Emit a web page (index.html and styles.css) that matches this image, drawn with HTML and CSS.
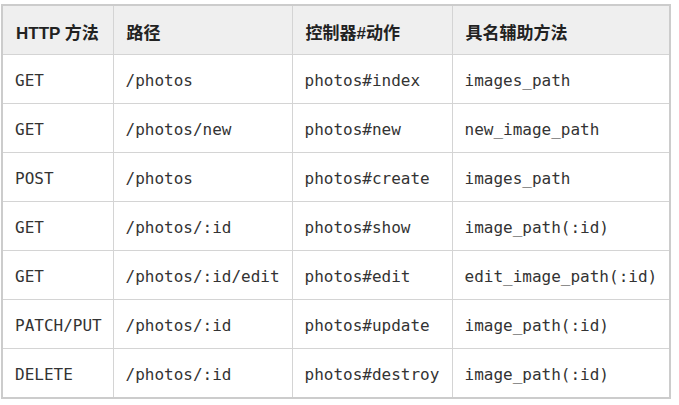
FILE: index.html
```html
<!DOCTYPE html>
<html lang="zh-CN">
<head>
    <meta charset="UTF-8">
    <title>资源路由</title>
    <link rel="stylesheet" href="styles.css">
</head>
<body>

<table class="route-table">
    <colgroup>
        <col class="col-verb">
        <col class="col-path">
        <col class="col-action">
        <col class="col-helper">
    </colgroup>
    <thead>
        <tr>
            <th>HTTP 方法</th>
            <th>路径</th>
            <th>控制器#动作</th>
            <th>具名辅助方法</th>
        </tr>
    </thead>
    <tbody>
        <tr>
            <td>GET</td>
            <td>/photos</td>
            <td>photos#index</td>
            <td>images_path</td>
        </tr>
        <tr>
            <td>GET</td>
            <td>/photos/new</td>
            <td>photos#new</td>
            <td>new_image_path</td>
        </tr>
        <tr>
            <td>POST</td>
            <td>/photos</td>
            <td>photos#create</td>
            <td>images_path</td>
        </tr>
        <tr>
            <td>GET</td>
            <td>/photos/:id</td>
            <td>photos#show</td>
            <td>image_path(:id)</td>
        </tr>
        <tr>
            <td>GET</td>
            <td>/photos/:id/edit</td>
            <td>photos#edit</td>
            <td>edit_image_path(:id)</td>
        </tr>
        <tr>
            <td>PATCH/PUT</td>
            <td>/photos/:id</td>
            <td>photos#update</td>
            <td>image_path(:id)</td>
        </tr>
        <tr>
            <td>DELETE</td>
            <td>/photos/:id</td>
            <td>photos#destroy</td>
            <td>image_path(:id)</td>
        </tr>
    </tbody>
</table>

</body>
</html>
```

FILE: styles.css
```css
body, html {
    margin: 0;
    padding: 0;
    background-color: #fff;
}
body {
    padding: 4px 0 0 1px;
}
.route-table {
    width: 670px;
    table-layout: fixed;
    border-collapse: collapse;
    border: 2px solid #cccccc;
    color: #333;
}
.col-verb {
    width: 111px;
}
.col-path {
    width: 179px;
}
.col-action {
    width: 160px;
}
.col-helper {
    width: 218px;
}
.route-table th,
.route-table td {
    border: 1px solid #d4d4d4;
    padding: 3px 0 0 12px;
    height: 45px;
    text-align: left;
    white-space: nowrap;
}
.route-table th {
    background-color: #efefef;
    font-family: "Liberation Sans", "Noto Sans CJK SC", sans-serif;
    font-size: 17px;
    font-weight: 700;
    color: #222;
    padding-left: 13px;
}
.route-table td {
    font-family: "DejaVu Sans Mono", monospace;
    font-size: 16px;
}
```
